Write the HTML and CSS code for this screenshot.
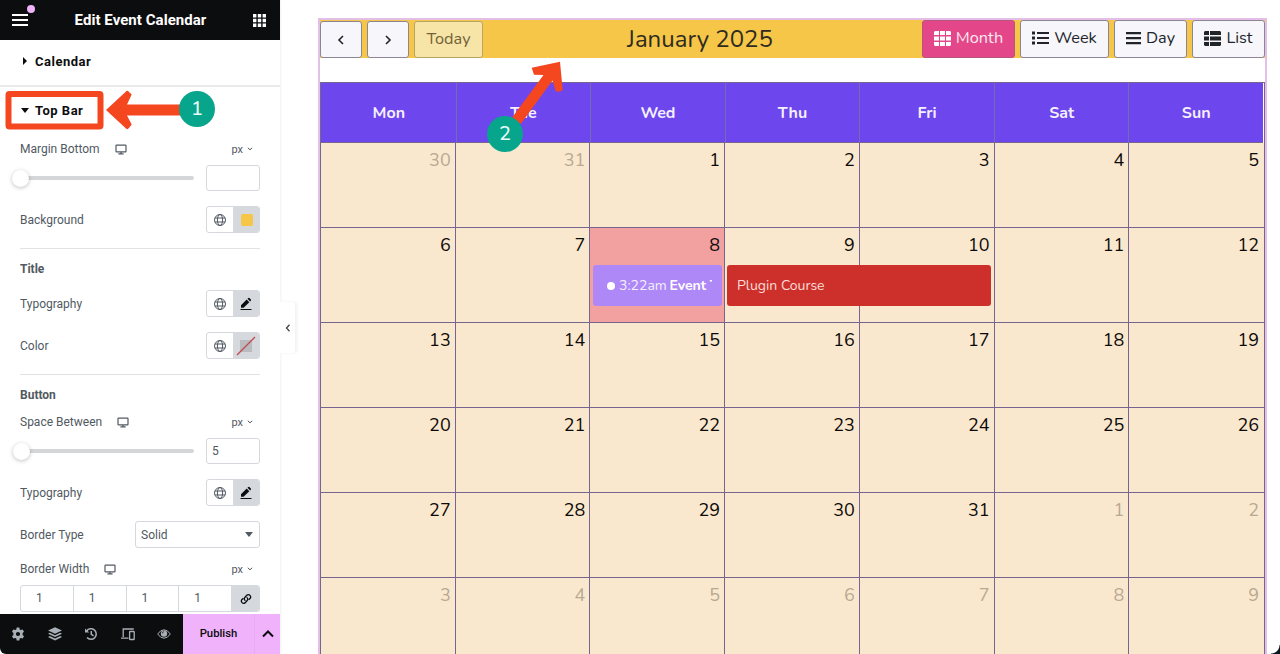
FILE: index.html
```html
<!DOCTYPE html>
<html lang="en">
<head>
    <meta charset="UTF-8">
    <meta name="viewport" content="width=device-width, initial-scale=1.0">
    <title>Edit Event Calendar</title>
    <link rel="stylesheet" href="styles.css">
</head>
<body>
    <!-- Shared icons -->
    <svg class="sprite">
        <symbol id="desktop" viewBox="0 0 12 11"><path d="M1.6 1.1h8.8q.6 0 .6.6v5.6q0 .6-.6.6H1.6q-.6 0-.6-.6V1.7q0-.6.6-.6zM3.4 9.9h5.2M6 8v1.8" fill="none" stroke="#515962" stroke-width="1.2"/></symbol>
        <symbol id="globe" viewBox="0 0 14 14"><g fill="none" stroke="#515962"><circle cx="7" cy="7" r="5.5"/><ellipse cx="7" cy="7" rx="2.6" ry="5.5"/><path d="M2 5h10M2 9h10"/></g></symbol>
        <symbol id="pen" viewBox="0 0 14 14"><path d="M2 8.2 7.7 2.6l2.6 2.6-5.7 5.600H2zM8.5 1.800l.8-.8q.5-.5 1.100 0l1.500 1.500q.5.5 0 1.100l-.8.8zM1.500 12h11v1.100h-11z" fill="#0c0d0e"/></symbol>
        <symbol id="chevron" viewBox="0 0 6 4"><path d="M.8.8 3 2.8 5.2.8" fill="none" stroke="#515962"/></symbol>
    </svg>

    <div class="app">
        <aside class="panel">
            <header class="panel-header">
                <span class="menu"><i></i><i></i><i></i><b class="dot"></b></span>
                <h1>Edit Event Calendar</h1>
                <svg width="13" height="13" viewBox="0 0 13 13" fill="#fff"><path d="M0 0h3.4v3.4H0zM4.8 0h3.4v3.4H4.8zM9.6 0H13v3.4H9.6zM0 4.8h3.4v3.4H0zM4.8 4.8h3.4v3.4H4.8zM9.6 4.8H13v3.4H9.6zM0 9.6h3.4V13H0zM4.8 9.6h3.4V13H4.8zM9.6 9.6H13V13H9.6z"/></svg>
            </header>

            <div class="section"><span class="caret right"></span>Calendar</div>
            <div class="section open"><span class="caret down"></span>Top Bar</div>

            <div class="controls">
                <div class="label-row first">Margin Bottom<svg class="device"><use href="#desktop"/></svg><span class="unit">px<svg><use href="#chevron"/></svg></span></div>
                <div class="slider-row"><div class="track"><span class="handle"></span></div><div class="number"></div></div>
                <div class="row">Background<span class="pair"><span><svg><use href="#globe"/></svg></span><span class="on"><i class="swatch"></i></span></span></div>

                <div class="heading">Title</div>
                <div class="row">Typography<span class="pair"><span><svg><use href="#globe"/></svg></span><span class="on"><svg><use href="#pen"/></svg></span></span></div>
                <div class="row">Color<span class="pair"><span><svg><use href="#globe"/></svg></span><span class="on"><svg class="none" viewBox="0 0 20 20"><path d="M4 4h12v12H4z" fill="#b9bbbf"/><path d="M1 19 19 1" stroke="#c2494c" stroke-width="1.3"/></svg></span></span></div>

                <div class="heading">Button</div>
                <div class="label-row">Space Between<svg class="device"><use href="#desktop"/></svg><span class="unit">px<svg><use href="#chevron"/></svg></span></div>
                <div class="slider-row"><div class="track"><span class="handle moved"></span></div><div class="number">5</div></div>
                <div class="row">Typography<span class="pair"><span><svg><use href="#globe"/></svg></span><span class="on"><svg><use href="#pen"/></svg></span></span></div>
                <div class="row">Border Type<span class="select">Solid<i></i></span></div>
                <div class="label-row last">Border Width<svg class="device"><use href="#desktop"/></svg><span class="unit">px<svg><use href="#chevron"/></svg></span></div>
                <div class="sides">
                    <span>1</span><span>1</span><span>1</span><span>1</span>
                    <span class="link"><svg width="12" height="12" viewBox="0 0 12 12" fill="none" stroke="#0c0d0e" stroke-width="1.3" stroke-linecap="round"><path d="M5 7.400a2.300 2.300 0 0 1 0-3.200L7 2.100a2.300 2.300 0 0 1 3.200 3.200L9 6.400"/><path d="M7 4.600a2.300 2.300 0 0 1 0 3.200L5 9.900a2.300 2.300 0 0 1-3.200-3.200L3 5.600"/></svg></span>
                </div>
            </div>

            <footer class="panel-footer">
                <div class="tools">
                    <svg viewBox="0 0 14 14" fill="#a9afb6"><path fill-rule="evenodd" d="M5.7.6h2.6l.4 1.8 1.2.7 1.8-.6L13 4.8l-1.4 1.3v1.8L13 9.2l-1.3 2.3-1.8-.6-1.2.7-.4 1.8H5.7l-.4-1.8-1.2-.7-1.8.6L1 9.2l1.400-1.300V6.100L1 4.800l1.300-2.300 1.800.6 1.200-.7zM7 4.900a2.100 2.100 0 1 0 0 4.200 2.100 2.100 0 0 0 0-4.200z"/></svg>
                    <svg viewBox="0 0 14 14" fill="#a9afb6"><path d="m7 .2 7 3.300-7 3.300-7-3.300zM1.800 5.800 7 8.200l5.200-2.400L14 6.700 7 10 0 6.700zM1.800 9.100 7 11.500l5.200-2.400 1.800.9-7 3.400L0 10z"/></svg>
                    <svg viewBox="0 0 14 14" fill="none" stroke="#a9afb6" stroke-width="1.5"><path d="M2.600 4A5.300 5.300 0 1 1 3 10.600M7.300 4v3.400l2.300 1.500"/><path d="M1 1.400v4.200h4.200z" fill="#a9afb6" stroke="none"/></svg>
                    <svg viewBox="0 0 14 14" fill="none" stroke="#a9afb6" stroke-width="1.300"><path d="M2.200 10V2h10.600M0 11.200h7.500"/><rect x="8.600" y="4.500" width="4.600" height="8" rx=".6"/></svg>
                    <svg viewBox="0 0 14 14"><path d="M.7 7Q3.400 2.800 7 2.800T13.300 7Q10.600 11.200 7 11.200T.7 7z" fill="none" stroke="#a9afb6"/><circle cx="7" cy="6.600" r="3.200" fill="#a9afb6"/><path d="M5.200 6.400Q5.300 4.800 6.900 4.700" fill="none" stroke="#0c0d0e" stroke-width=".8"/></svg>
                </div>
                <div class="publish">Publish</div>
                <div class="publish-more"><svg width="12" height="8" viewBox="0 0 12 8" fill="none" stroke="#0c0d0e" stroke-width="2"><path d="m1 6.500 5-5 5 5"/></svg></div>
            </footer>
        </aside>

        <main class="preview">
            <div class="collapse"><svg width="6" height="8" viewBox="0 0 6 8" fill="none" stroke="#3f444b" stroke-width="1.300"><path d="M4.500.8 1.500 4l3 3.200"/></svg></div>
            <div class="widget">
                <div class="topbar">
                    <button class="nav"><svg width="8" height="10" viewBox="0 0 8 10"><path d="M6 1 2 5l4 4"/></svg></button>
                    <button class="nav"><svg width="8" height="10" viewBox="0 0 8 10"><path d="m2 1 4 4-4 4"/></svg></button>
                    <button class="today">Today</button>
                    <h2>January 2025</h2>
                    <button class="month active"><svg width="17" height="15" viewBox="0 0 17 15"><path d="M1 0h4v4H0V1zM6 0h5v4H6zM12 0h4l1 1v3h-5zM0 5.500h5v4H0zM6 5.500h5v4H6zM12 5.500h5v4h-5zM0 11h5v4H1l-1-1zM6 11h5v4H6zM12 11h5v3l-1 1h-4z"/></svg>Month</button>
                    <button class="week"><svg width="17" height="14" viewBox="0 0 17 14"><path d="M0 .5h3v3H0zM0 5.500h3v3H0zM0 10.500h3v3H0zM5 1h12v2H5zM5 6h12v2H5zM5 11h12v2H5z"/></svg>Week</button>
                    <button class="day"><svg width="15" height="14" viewBox="0 0 15 14"><path d="M0 1h15v2.200H0zM0 6h15v2.200H0zM0 11h15v2.200H0z"/></svg>Day</button>
                    <button class="list"><svg width="17" height="15" viewBox="0 0 17 15"><path d="M1 0h4v4H0V1zM6 0h10l1 1v3H6zM0 5.500h5v4H0zM6 5.500h11v4H6zM0 11h5v4H1l-1-1zM6 11h11v3l-1 1H6z"/></svg>List</button>
                </div>
                <div class="calendar">
                    <div class="weekdays"><span>Mon</span><span>Tue</span><span>Wed</span><span>Thu</span><span>Fri</span><span>Sat</span><span>Sun</span></div>
                    <div class="days" id="days"></div>
                    <div class="event timed"><i></i><span>3:22am</span> <b>Event T</b></div>
                    <div class="event course">Plugin Course</div>
                </div>
            </div>
        </main>

        <!-- Step pointers -->
        <svg class="pointers" width="1280" height="654" viewBox="0 0 1280 654">
            <rect x="8.500" y="94" width="92" height="32.500" rx="1" fill="none" stroke="#f4461f" stroke-width="6"/>
            <path d="M106 110 126 91.500Q127.500 90 129 92L131.700 94.500 127 104.500H181v11h-54L131.700 124.500 129 128Q127.500 130 126 128.500z" fill="#f4461f"/>
            <path d="m531.700 67.700 28.300-6 2.700 28.300q-3 2.500-7 1.300L552.500 80.500 520.700 124l-8.400-6.700L543.500 75l-9.500-.3z" fill="#f4461f"/>
            <circle cx="197" cy="109" r="18" fill="#06a58c"/>
            <circle cx="505" cy="134" r="18" fill="#06a58c"/>
            <text x="197" y="115">1</text>
            <text x="505" y="140">2</text>
        </svg>
        <span class="corner"></span>
    </div>

    <script>
        // Six weeks starting on Monday, December 30
        var days = document.getElementById("days");
        for (var i = 0; i < 42; i++) {
            var date = new Date(2024, 11, 30 + i);
            var cell = document.createElement("div");
            cell.textContent = date.getDate();
            if (date.getMonth() != 0) {
                cell.classList.add("other");
            }
            if (i == 9) {
                cell.classList.add("now");
            }
            days.appendChild(cell);
        }
    </script>
</body>
</html>
```

FILE: styles.css
```css
* {
    box-sizing: border-box;
}
body {
    margin: 0;
    background: #fff;
    font-family: Roboto, "Liberation Sans", sans-serif;
    font-size: 12px;
    color: #515962;
}
.sprite {
    display: none;
}
.app {
    position: relative;
    display: flex;
    width: 1280px;
    height: 654px;
    overflow: hidden;
}

/* Panel */
.panel {
    display: flex;
    flex-direction: column;
    width: 280px;
    height: 654px;
    flex: none;
    box-shadow: 0 0 3px rgba(0, 0, 0, 0.1);
}
.panel-header {
    display: flex;
    align-items: center;
    justify-content: space-between;
    height: 40px;
    padding: 0 14px 0 12px;
    background: #0c0d0e;
}
.panel-header h1 {
    margin: 0;
    font-size: 15px;
    font-weight: 700;
    letter-spacing: 0.05px;
    color: #fff;
}
.menu {
    position: relative;
    display: flex;
    flex-direction: column;
    gap: 3px;
    width: 16px;
}
.menu i {
    height: 2px;
    background: #fff;
}
.dot {
    position: absolute;
    left: 15px;
    top: -9px;
    width: 8px;
    height: 8px;
    border-radius: 50%;
    background: #f0b3f8;
}
.section {
    display: flex;
    align-items: center;
    height: 47px;
    padding: 0 0 3px 21px;
    border-bottom: 2px solid #e9eaec;
    font-size: 13px;
    letter-spacing: 0.5px;
    font-weight: 700;
    color: #0c0d0e;
}
.section.open {
    height: 46px;
    padding-bottom: 0;
    border: 0;
}
.caret {
    width: 14px;
}
.caret::before {
    content: "";
    display: block;
    width: 0;
    border: 4px solid transparent;
}
.caret.right::before {
    margin-left: 2px;
    border-left-color: #0c0d0e;
    border-right: 0;
}
.caret.down::before {
    border-top: 5px solid #0c0d0e;
    border-bottom: 0;
}

/* Controls */
.controls {
    flex: 1;
    padding: 0 20px;
    overflow: hidden;
}
.label-row {
    display: flex;
    align-items: center;
    height: 16px;
}
.label-row.first {
    margin-top: 8px;
}
.label-row.last {
    margin: 13px 0 8px;
}
.device {
    width: 12px;
    height: 11px;
    margin-left: 15px;
}
.unit {
    display: flex;
    align-items: center;
    gap: 4px;
    margin-left: auto;
    padding-right: 7px;
    font-size: 11px;
}
.unit svg {
    width: 6px;
    height: 4px;
}
.slider-row {
    display: flex;
    align-items: center;
    gap: 12px;
    height: 26px;
    margin: 8px 0 15px;
}
.track {
    position: relative;
    flex: 1;
    height: 4px;
    border-radius: 2px;
    background: #d5d6d8;
}
.handle {
    position: absolute;
    left: -8px;
    top: -6px;
    width: 17px;
    height: 17px;
    border-radius: 50%;
    background: #fff;
    box-shadow: 0 1px 4px rgba(0, 0, 0, 0.25);
}
.handle.moved {
    left: -7px;
}
.number {
    width: 54px;
    height: 26px;
    padding-left: 5px;
    border: 1px solid #d5d8dc;
    border-radius: 3px;
    line-height: 24px;
}
.row {
    display: flex;
    align-items: center;
    justify-content: space-between;
    height: 27px;
    margin-bottom: 15px;
}
.pair {
    display: flex;
    width: 54px;
    height: 27px;
    border: 1px solid #d5d8dc;
    border-radius: 3px;
    overflow: hidden;
}
.pair span {
    display: flex;
    align-items: center;
    justify-content: center;
    flex: 1;
}
.pair .on {
    background: #d5d8dc;
}
.pair svg {
    width: 14px;
    height: 14px;
}
.pair .none {
    width: 20px;
    height: 20px;
}
.swatch {
    width: 12px;
    height: 12px;
    margin-left: 1px;
    border-radius: 2px;
    background: #f6c648;
}
.heading {
    height: 41px;
    margin-bottom: 1px;
    border-top: 1px solid #e0e2e5;
    line-height: 40px;
    font-weight: 700;
}
.heading + .label-row {
    margin-top: -2px;
}
.select {
    display: flex;
    align-items: center;
    justify-content: space-between;
    width: 125px;
    height: 27px;
    padding: 0 6px 0 5px;
    border: 1px solid #d5d8dc;
    border-radius: 3px;
}
.select i {
    border: 4px solid transparent;
    border-top: 5px solid #515962;
    border-bottom: 0;
}
.row + .label-row.last {
    margin-top: -2px;
}
.sides {
    display: flex;
    height: 27px;
    border: 1px solid #d5d8dc;
    border-radius: 3px;
    overflow: hidden;
}
.sides span {
    flex: 1;
    padding-left: 15px;
    border-right: 1px solid #d5d8dc;
    line-height: 25px;
}
.sides .link {
    display: flex;
    align-items: center;
    justify-content: center;
    flex: 0 0 27px;
    padding: 0;
    border: 0;
    background: #d5d8dc;
}

/* Footer */
.panel-footer {
    display: flex;
    height: 40px;
    background: #0c0d0e;
    border-bottom-left-radius: 6px;
}
.tools {
    display: flex;
    align-items: center;
    justify-content: space-between;
    width: 183px;
    padding: 0 12px 0 11px;
}
.tools svg {
    width: 14px;
    height: 14px;
}
.publish,
.publish-more {
    display: flex;
    align-items: center;
    justify-content: center;
    width: 71px;
    background: #f0b3fb;
    font-size: 11.3px;
    font-weight: 500;
    color: #0c0d0e;
}
.publish {
    padding-bottom: 2px;
}
.publish-more {
    width: 26px;
    border-left: 1px solid #e8aaf3;
}

/* Preview */
.preview {
    position: relative;
    flex: 1;
    padding: 18px 13px 0 38px;
    font-family: Nunito, Lato, "Open Sans", sans-serif;
}
.collapse {
    position: absolute;
    left: 0;
    top: 302px;
    display: flex;
    align-items: center;
    justify-content: center;
    width: 15px;
    height: 51px;
    border-radius: 0 3px 3px 0;
    background: #fff;
    box-shadow: 2px 0 3px rgba(0, 0, 0, 0.06);
}
.widget {
    width: 949px;
    height: 640px;
    border: 2px solid #e3bfe8;
}
.topbar {
    display: flex;
    height: 38px;
    background: #f6c648;
    color: #212529;
}
.topbar button {
    display: flex;
    align-items: center;
    justify-content: center;
    gap: 5px;
    height: 38px;
    margin: 0 0 0 5px;
    padding: 0 0 2px;
    border: 1px solid #8c8596;
    border-radius: 3px;
    background: #f7f7fb;
    font-family: inherit;
    font-size: 16.3px;
    color: #212529;
    fill: #212529;
}
.topbar .nav {
    width: 42px;
    height: 37px;
    margin-top: 1px;
    padding: 0;
}
.topbar .nav:first-child {
    margin-left: 0;
}
.nav svg {
    fill: none;
    stroke: #212529;
    stroke-width: 1.6;
}
.topbar .today {
    width: 69px;
    height: 37px;
    margin-top: 1px;
    border-color: #b9a468;
    background: #f7e4a7;
    color: #716237;
}
.topbar h2 {
    flex: 1;
    margin: 0;
    line-height: 39px;
    text-align: center;
    font-size: 24px;
    font-weight: 400;
    color: #2f2b20;
}
.topbar .month {
    width: 93px;
}
.topbar .week {
    width: 89px;
}
.topbar .day {
    width: 73px;
}
.topbar .list {
    width: 73px;
}
.topbar .active {
    border-color: #b5567f;
    background: #e34789;
    color: #fde9f2;
    fill: #fff;
}

/* Calendar */
.calendar {
    position: relative;
    margin-top: 24px;
    border: 1px solid #756590;
    border-bottom: 0;
}
.weekdays,
.days {
    display: grid;
    grid-template-columns: repeat(7, 1fr);
}
.weekdays {
    height: 60px;
    margin-right: 1px;
    background: #6e46ed;
    border-bottom: 1px solid #756590;
}
.weekdays span {
    border-left: 1px solid #756bb0;
    line-height: 60px;
    text-align: center;
    font-size: 16px;
    font-weight: 700;
    color: #f4f0ff;
}
.weekdays span:first-child {
    border-left-color: transparent;
}
.days {
    grid-template-rows: 85px 95px 85px 85px 85px 85px;
}
.days div {
    padding: 5px 4px 0 0;
    border-right: 1px solid #756590;
    border-bottom: 1px solid #756590;
    background: #fae8ce;
    line-height: 25px;
    text-align: right;
    font-size: 18px;
    color: #0c0a08;
}
.days div:nth-child(7n) {
    padding-right: 5px;
    border-right: 0;
}
.days .other {
    color: #b8a993;
}
.days .now {
    background: #f3a0a1;
}
.event {
    position: absolute;
    top: 182px;
    height: 41px;
    border-radius: 3px;
    line-height: 41px;
    font-size: 14px;
    white-space: nowrap;
    overflow: hidden;
    color: #f3efff;
}
.timed {
    left: 272px;
    width: 129px;
    padding-left: 14px;
    border-right: 10px solid #ae88f6;
    background: #ae88f6;
}
.timed i {
    display: inline-block;
    width: 8px;
    height: 8px;
    margin-right: 4px;
    border-radius: 50%;
    background: #fff;
}
.timed b {
    margin-left: -1px;
    color: #fff;
}
.course {
    left: 406px;
    width: 264px;
    padding-left: 10px;
    background: #cd302b;
    color: #fbdcd8;
}

/* Pointers */
.pointers {
    position: absolute;
    left: 0;
    top: 0;
    pointer-events: none;
}
.pointers text {
    fill: #e8fbf6;
    font-family: Nunito, Lato, sans-serif;
    font-size: 20px;
    font-weight: 500;
    text-anchor: middle;
}
.corner {
    position: absolute;
    right: 0;
    bottom: 0;
    width: 9px;
    height: 9px;
    background: radial-gradient(circle at 0 0, #fff 8px, #07161f 9px);
}
```
